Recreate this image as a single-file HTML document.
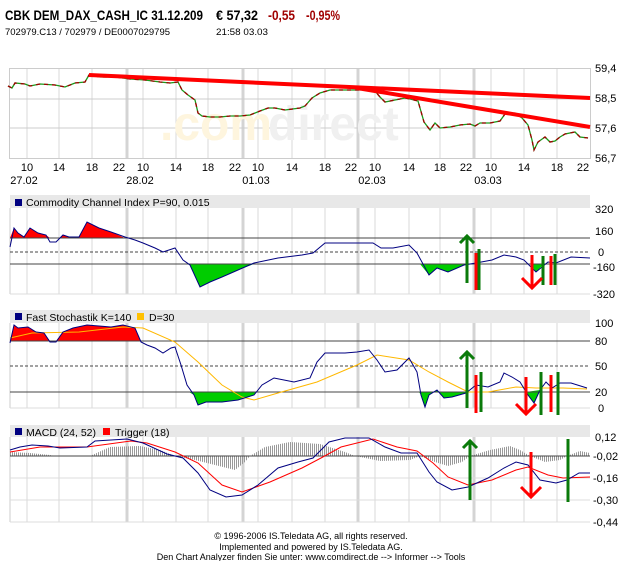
<!DOCTYPE html>
<html><head><meta charset="utf-8"><style>
body{margin:0;background:#fff;width:622px;height:561px;overflow:hidden;font-family:"Liberation Sans",sans-serif}
svg{display:block}
</style></head><body>
<svg width="622" height="561" viewBox="0 0 622 561" xmlns="http://www.w3.org/2000/svg" font-family="Liberation Sans, sans-serif">
<defs>
<pattern id="hp" width="2" height="4" patternUnits="userSpaceOnUse"><rect width="1" height="4" fill="#999"/></pattern>
<g id="grid" stroke="#d8d8d8" stroke-width="1">
<line x1="27" x2="27" y1="0" y2="100"/><line x1="59" x2="59" y1="0" y2="100"/><line x1="92" x2="92" y1="0" y2="100"/>
<line x1="143" x2="143" y1="0" y2="100"/><line x1="176" x2="176" y1="0" y2="100"/><line x1="208" x2="208" y1="0" y2="100"/>
<line x1="258" x2="258" y1="0" y2="100"/><line x1="292" x2="292" y1="0" y2="100"/><line x1="325" x2="325" y1="0" y2="100"/>
<line x1="375" x2="375" y1="0" y2="100"/><line x1="409" x2="409" y1="0" y2="100"/><line x1="440" x2="440" y1="0" y2="100"/>
<line x1="491" x2="491" y1="0" y2="100"/><line x1="524" x2="524" y1="0" y2="100"/><line x1="557" x2="557" y1="0" y2="100"/>
<g stroke-width="3" stroke="#d4d4d4"><line x1="127" x2="127" y1="0" y2="100"/><line x1="243" x2="243" y1="0" y2="100"/><line x1="358" x2="358" y1="0" y2="100"/><line x1="474" x2="474" y1="0" y2="100"/></g>
</g>
</defs>
<!-- header -->
<text x="5" y="20" font-size="14" font-weight="bold" textLength="198" lengthAdjust="spacingAndGlyphs">CBK DEM_DAX_CASH_IC 31.12.209</text>
<text x="216" y="20" font-size="14" font-weight="bold" textLength="42" lengthAdjust="spacingAndGlyphs">€ 57,32</text>
<text x="268" y="20" font-size="14" font-weight="bold" fill="#a00000" textLength="27" lengthAdjust="spacingAndGlyphs">-0,55</text>
<text x="306" y="20" font-size="14" font-weight="bold" fill="#a00000" textLength="34" lengthAdjust="spacingAndGlyphs">-0,95%</text>
<text x="5" y="35" font-size="9.5" textLength="165" lengthAdjust="spacingAndGlyphs">702979.C13  /  702979  /  DE0007029795</text>
<text x="216" y="35" font-size="9.5" textLength="52" lengthAdjust="spacingAndGlyphs">21:58   03.03</text>

<!-- main chart -->
<g transform="translate(0,68) scale(1,0.9)"><use href="#grid"/></g>
<rect x="9.5" y="68.5" width="581" height="90" fill="none" stroke="#ccc"/>
<line x1="10" x2="590" y1="99" y2="99" stroke="#ccc"/><line x1="10" x2="590" y1="128" y2="128" stroke="#ccc"/>
<text x="160" y="140" font-size="48" font-weight="bold" fill="#fef5de">.com</text>
<text x="268" y="140" font-size="48" font-weight="bold" fill="#f0f0f0">direct</text>
<polyline fill="none" stroke="#1a9a1a" stroke-width="1.3" points="8,86 12,88 15,83 25,84 30,86 40,84 55,85 65,87 75,83 85,82 89,75 100,77 115,77 130,79 145,80 160,82 170,83 178,82 182,90 188,95 195,100 198,113 202,116 210,117 220,117 230,116 240,116 250,115 260,111 268,108 275,108 285,110 300,108 305,106 312,98 320,93 330,90 340,90 360,90 370,89 375,91 380,97 385,102 395,100 405,98 410,99 418,101 424,122 430,130 435,123 440,128 450,127 460,125 470,124 475,126 480,123 490,123 500,121 505,114 515,113 522,118 528,125 532,140 534,150 538,142 545,137 550,142 555,141 560,137 565,134 575,132 580,137 588,138"/>
<polyline fill="none" stroke="#a00000" stroke-width="1.3" stroke-dasharray="4 4" points="8,86 12,88 15,83 25,84 30,86 40,84 55,85 65,87 75,83 85,82 89,75 100,77 115,77 130,79 145,80 160,82 170,83 178,82 182,90 188,95 195,100 198,113 202,116 210,117 220,117 230,116 240,116 250,115 260,111 268,108 275,108 285,110 300,108 305,106 312,98 320,93 330,90 340,90 360,90 370,89 375,91 380,97 385,102 395,100 405,98 410,99 418,101 424,122 430,130 435,123 440,128 450,127 460,125 470,124 475,126 480,123 490,123 500,121 505,114 515,113 522,118 528,125 532,140 534,150 538,142 545,137 550,142 555,141 560,137 565,134 575,132 580,137 588,138"/>
<line x1="89" y1="75" x2="590" y2="98" stroke="#f00" stroke-width="4"/>
<line x1="357" y1="88" x2="590" y2="127" stroke="#f00" stroke-width="4"/>
<g font-size="11"><text x="595" y="72">59,4</text><text x="595" y="102">58,5</text><text x="595" y="132">57,6</text><text x="595" y="162">56,7</text></g>
<g font-size="11" text-anchor="middle">
<text x="27" y="171">10</text><text x="59" y="171">14</text><text x="92" y="171">18</text><text x="119" y="171">22</text>
<text x="143" y="171">10</text><text x="176" y="171">14</text><text x="208" y="171">18</text><text x="235" y="171">22</text>
<text x="258" y="171">10</text><text x="292" y="171">14</text><text x="325" y="171">18</text><text x="351" y="171">22</text>
<text x="375" y="171">10</text><text x="409" y="171">14</text><text x="440" y="171">18</text><text x="466" y="171">22</text>
<text x="491" y="171">10</text><text x="524" y="171">14</text><text x="557" y="171">18</text><text x="583" y="171">22</text>
<text x="24" y="184">27.02</text><text x="140" y="184">28.02</text><text x="256" y="184">01.03</text><text x="372" y="184">02.03</text><text x="488" y="184">03.03</text>
</g>

<!-- CCI -->
<rect x="10" y="195" width="580" height="13" fill="#e8e8e8"/>
<rect x="15" y="199" width="7" height="7" fill="#000080"/>
<text x="26" y="206" font-size="10.5">Commodity Channel Index P=90, 0.015</text>
<g transform="translate(0,208) scale(1,0.86)"><use href="#grid"/></g>
<line x1="10" x2="10" y1="208" y2="294" stroke="#ccc"/>
<line x1="10" x2="590" y1="294" y2="294" stroke="#ddd"/>
<polygon fill="#f00" points="10,238 14,228 18,233 24,237 30,228 38,233 46,235 50,238 60,238 63,235 69,237 79,237 87,222 99,228 111,232 125,238"/>
<polygon fill="#0c0" points="186,264 190,265 200,287 210,282 222,277 238,270 254,264"/>
<polygon fill="#0c0" points="420,264 429,275 437,268 448,272 464,265 476,264"/>
<polygon fill="#0c0" points="530,264 536,272 544,264"/>
<line x1="10" x2="590" y1="238" y2="238" stroke="#444"/>
<line x1="10" x2="590" y1="252" y2="252" stroke="#444" stroke-dasharray="3 2"/>
<line x1="10" x2="590" y1="264" y2="264" stroke="#444"/>
<polyline fill="none" stroke="#000080" points="10,247 14,228 18,233 24,237 30,228 38,233 46,235 50,242 56,242 63,235 69,237 79,237 87,222 99,228 111,232 125,237 135,240 143,243 155,248 163,252 175,248 183,260 190,265 200,287 210,282 222,277 238,270 254,263 278,258 302,255 313,253 325,243 357,243 373,243 381,248 393,248 409,245 417,253 429,275 437,268 448,272 464,265 476,263 492,260 504,255 516,257 524,260 536,272 548,262 556,263 571,257 590,258"/>
<g font-size="11"><text x="595" y="213">320</text><text x="595" y="235">160</text><text x="598" y="256">0</text><text x="593" y="271">-160</text><text x="593" y="298">-320</text></g>

<!-- Stoch -->
<rect x="10" y="310" width="580" height="13" fill="#e8e8e8"/>
<rect x="15" y="313" width="7" height="7" fill="#000080"/>
<text x="26" y="321" font-size="10.5">Fast Stochastik K=140</text>
<rect x="137" y="313" width="7" height="7" fill="#ffc000"/>
<text x="149" y="321" font-size="10.5">D=30</text>
<g transform="translate(0,323) scale(1,0.85)"><use href="#grid"/></g>
<line x1="10" x2="10" y1="323" y2="408" stroke="#ccc"/>
<line x1="10" x2="590" y1="408" y2="408" stroke="#ddd"/>
<polygon fill="#f00" points="10,341 14,325 18,328 28,327 36,332 44,333 50,341 56,341 63,332 73,328 87,325 111,327 123,325 135,328 141,341"/>
<polygon fill="#0c0" points="189,392 194,395 198,405 206,402 222,402 238,400 254,395 256,392"/>
<polygon fill="#0c0" points="419,392 421,395 425,407 429,395 437,390 444,398 452,397 466,393 468,392"/>
<polygon fill="#0c0" points="526,392 528,395 534,403 540,390"/>
<line x1="10" x2="590" y1="341" y2="341" stroke="#444"/>
<line x1="10" x2="590" y1="366" y2="366" stroke="#444" stroke-dasharray="3 2"/>
<line x1="10" x2="590" y1="392" y2="392" stroke="#444"/>
<polyline fill="none" stroke="#ffb800" points="10,338 32,333 79,332 123,327 143,328 175,342 198,362 222,385 242,397 254,400 278,393 317,382 357,365 377,355 409,360 429,372 448,382 468,392 488,392 516,387 536,388 563,388 587,389"/>
<polyline fill="none" stroke="#000080" points="10,343 14,325 18,328 28,327 36,332 44,333 50,342 56,342 63,332 73,328 87,325 111,327 123,325 135,328 141,342 147,345 155,348 163,353 171,348 175,347 181,365 187,385 194,395 198,405 206,402 222,402 238,400 254,395 262,385 274,378 294,382 310,378 317,362 325,353 345,353 357,352 369,350 377,360 385,372 397,370 409,358 417,372 421,395 425,407 429,395 437,390 444,398 452,397 466,393 476,385 488,387 500,382 504,373 512,377 520,382 528,395 534,403 540,390 546,382 552,388 560,383 571,383 587,388"/>
<g font-size="11"><text x="595" y="327">100</text><text x="595" y="345">80</text><text x="595" y="370">50</text><text x="595" y="396">20</text><text x="598" y="412">0</text></g>

<!-- MACD -->
<rect x="10" y="425" width="580" height="12" fill="#e8e8e8"/>
<rect x="15" y="428" width="7" height="7" fill="#000080"/>
<text x="26" y="436" font-size="10.5">MACD (24, 52)</text>
<rect x="103" y="428" width="7" height="7" fill="#f00"/>
<text x="115" y="436" font-size="10.5">Trigger (18)</text>
<g transform="translate(0,437) scale(1,0.85)"><use href="#grid"/></g>
<line x1="10" x2="10" y1="437" y2="522" stroke="#ccc"/>
<line x1="10" x2="590" y1="522" y2="522" stroke="#ddd"/>
<g stroke="#ddd"><line x1="10" x2="590" y1="478" y2="478"/><line x1="10" x2="590" y1="500" y2="500"/></g>
<g fill="url(#hp)">
<polygon points="10,456 10,452 30,453 50,455 55,456"/>
<polygon points="90,456 110,447 140,446 160,450 175,456"/>
<polygon points="175,456 195,460 215,465 235,470 245,462 250,456"/>
<polygon points="250,456 265,447 290,442 320,444 345,452 355,456"/>
<polygon points="355,456 380,461 410,460 420,456"/>
<polygon points="420,456 435,462 448,466 462,462 470,456"/>
<polygon points="470,456 490,450 510,446 520,450 530,456"/>
<polygon points="530,456 545,462 560,460 567,456"/>
<polygon points="567,456 580,451 590,453 590,456"/>
</g>
<line x1="10" x2="590" y1="456" y2="456" stroke="#444"/>
<polyline fill="none" stroke="#f00" points="10,452 40,447 87,447 131,441 147,443 175,452 198,463 222,485 242,492 270,482 302,468 321,458 341,447 373,439 397,447 417,451 433,463 448,477 468,485 492,480 516,470 528,467 548,475 563,478 590,477"/>
<polyline fill="none" stroke="#000080" points="10,450 20,447 32,445 48,446 60,448 87,447 95,441 127,439 143,443 167,454 183,458 198,473 210,490 226,497 242,495 258,485 278,468 298,462 313,458 329,442 345,438 369,438 385,447 401,453 417,453 429,472 437,482 452,490 468,487 488,478 504,468 516,462 528,465 540,480 556,483 567,480 579,473 590,473"/>
<g font-size="11"><text x="595" y="441">0,12</text><text x="593" y="460">-0,02</text><text x="593" y="482">-0,16</text><text x="593" y="504">-0,30</text><text x="593" y="526">-0,44</text></g>

<!-- arrows -->
<g stroke-width="3" fill="none">
<g stroke="#0a7a0a"><line x1="467" y1="283" x2="467" y2="236"/><polyline points="460,243 467,236 474,243"/>
<line x1="479" y1="249" x2="479" y2="290"/><line x1="543" y1="256" x2="543" y2="285"/><line x1="555" y1="254" x2="555" y2="285"/>
<line x1="467" y1="408" x2="467" y2="352"/><polyline points="460,359 467,352 474,359"/>
<line x1="481" y1="372" x2="481" y2="412"/><line x1="541" y1="372" x2="541" y2="415"/><line x1="558" y1="372" x2="558" y2="415"/>
<line x1="470" y1="500" x2="470" y2="440"/><polyline points="463,448 470,441 477,448"/>
<line x1="568" y1="439" x2="568" y2="502"/></g>
<g stroke="#f00"><line x1="476" y1="253" x2="476" y2="290"/><line x1="532" y1="255" x2="532" y2="288"/><polyline points="522,278 532,288 542,278"/><line x1="551" y1="256" x2="551" y2="285"/>
<line x1="476" y1="375" x2="476" y2="413"/><line x1="526" y1="377" x2="526" y2="414"/><polyline points="516,404 526,414 536,404"/><line x1="551" y1="375" x2="551" y2="412"/>
<line x1="531" y1="452" x2="531" y2="497"/><polyline points="521,487 531,497 541,487"/></g>
</g>

<!-- footer -->
<g font-size="9" text-anchor="middle"><text x="311" y="539">© 1996-2006 IS.Teledata AG, all rights reserved.</text><text x="311" y="550">Implemented and powered by IS.Teledata AG.</text><text x="311" y="560">Den Chart Analyzer finden Sie unter: www.comdirect.de --&gt; Informer --&gt; Tools</text></g>
</svg>
</body></html>
